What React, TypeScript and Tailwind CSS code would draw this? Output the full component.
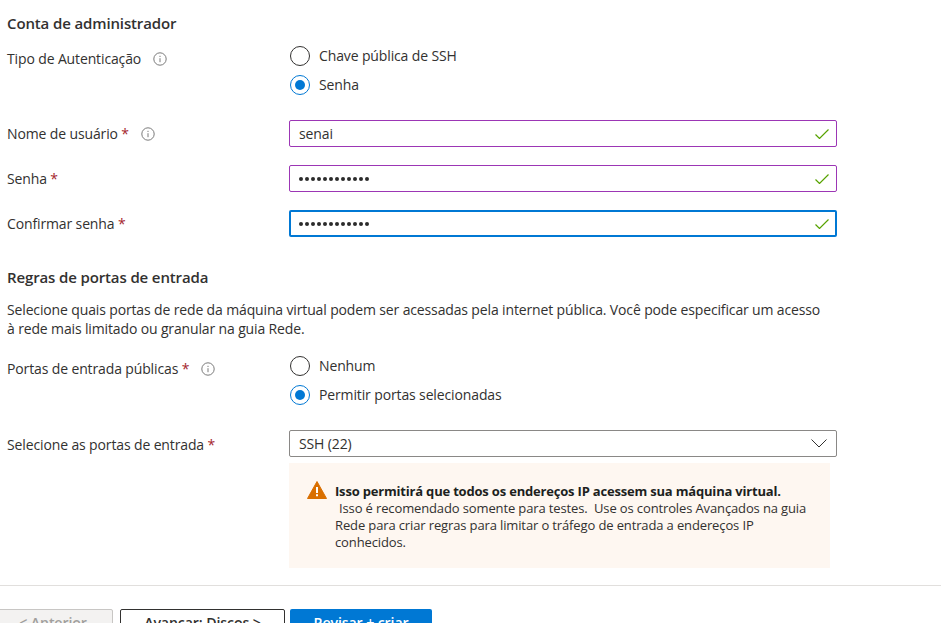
const labelFont = "font-['Open_Sans','Noto_Sans',sans-serif]";

const InfoIcon = () => (
    <svg width="14" height="14" viewBox="0 0 14 14" fill="none" className="shrink-0">
        <circle cx="7" cy="7" r="6.2" stroke="#7a7a7a" strokeWidth="1" />
        <path d="M7 6.2V10.2" stroke="#7a7a7a" strokeWidth="1" />
        <path d="M7 3.8V5" stroke="#7a7a7a" strokeWidth="1" />
    </svg>
);

const CheckIcon = () => (
    <svg width="14" height="10" viewBox="0 0 14 10" fill="none" className="shrink-0">
        <path d="M0.5 5.5L4.5 9.5L13.5 0.5" stroke="#57a300" strokeWidth="1.2" />
    </svg>
);

const Label = ({ text, required, info }: { text: string; required?: boolean; info?: boolean }) => (
    <div className="flex items-center gap-[12px] w-[282px] shrink-0 text-[14px] text-[#323130] tracking-[-0.13px]">
        <span>
            {text}
            {required && <span className="text-[#a4262c]"> *</span>}
        </span>
        {info && <InfoIcon />}
    </div>
);

const Radio = ({ text, checked }: { text: string; checked?: boolean }) => (
    <div className="flex items-center gap-[9px] ml-[1px] h-[20px] text-[14px] text-[#323130] tracking-[-0.13px]">
        {checked ? (
            <span className="w-[20px] h-[20px] rounded-full border border-[#0078d4] flex items-center justify-center">
                <span className="w-[10px] h-[10px] rounded-full bg-[#0078d4]" />
            </span>
        ) : (
            <span className="w-[20px] h-[20px] rounded-full border border-[#323130]" />
        )}
        <span className="mb-[2px]">{text}</span>
    </div>
);

const TextField = ({ value, mask, focused }: { value?: string; mask?: boolean; focused?: boolean }) => (
    <div
        className={`w-[548px] h-[27px] rounded-[2px] flex items-center justify-between text-[14px] text-[#323130] tracking-[-0.13px] ${
            focused ? 'border-2 border-[#0078d4] pl-[8px] pr-[6px]' : 'border border-[#9c36b5] pl-[9px] pr-[7px]'
        }`}
    >
        {mask ? (
            <span className="flex gap-[2px]">
                {Array.from({ length: 12 }).map((_, i) => (
                    <span key={i} className="w-[4px] h-[4px] rounded-full bg-[#2b2b2b]" />
                ))}
            </span>
        ) : (
            <span>{value}</span>
        )}
        <CheckIcon />
    </div>
);

export default function App() {
    return (
        <div className={`w-[941px] h-[623px] overflow-hidden bg-white ${labelFont}`}>
            <div className="pl-[7px] pt-[13px]">
                <h2 className="text-[15px] leading-[20px] font-semibold text-[#323130] tracking-[-0.13px]">Conta de administrador</h2>

                <div className="flex mt-[13px]">
                    <div className="pt-[2px] h-fit">
                        <Label text="Tipo de Autenticação" info />
                    </div>
                    <div className="flex flex-col gap-[9px]">
                        <Radio text="Chave pública de SSH" />
                        <Radio text="Senha" checked />
                    </div>
                </div>

                <div className="flex items-center mt-[25px]">
                    <Label text="Nome de usuário" required info />
                    <TextField value="senai" />
                </div>
                <div className="flex items-center mt-[18px]">
                    <Label text="Senha" required />
                    <TextField mask />
                </div>
                <div className="flex items-center mt-[18px]">
                    <Label text="Confirmar senha" required />
                    <TextField mask focused />
                </div>

                <h2 className="mt-[30px] text-[15px] leading-[20px] font-semibold text-[#323130] tracking-[-0.13px]">Regras de portas de entrada</h2>
                <p className="mt-[13px] w-[840px] text-[14px] leading-[19px] text-[#323130] tracking-[-0.14px]">
                    Selecione quais portas de rede da máquina virtual podem ser acessadas pela internet pública. Você pode especificar um acesso
                    <br />
                    à rede mais limitado ou granular na guia Rede.
                </p>

                <div className="flex mt-[18px]">
                    <div className="pt-[2px] h-fit">
                        <Label text="Portas de entrada públicas" required info />
                    </div>
                    <div className="flex flex-col gap-[9px]">
                        <Radio text="Nenhum" />
                        <Radio text="Permitir portas selecionadas" checked />
                    </div>
                </div>

                <div className="flex items-center mt-[25px]">
                    <div className="pt-[2px]">
                        <Label text="Selecione as portas de entrada" required />
                    </div>
                    <div className="w-[548px] h-[27px] rounded-[2px] border border-[#8a8886] flex items-center justify-between pl-[9px] pr-[9px] text-[14px] text-[#323130] tracking-[-0.13px]">
                        <span>SSH (22)</span>
                        <svg width="16" height="9" viewBox="0 0 16 9" fill="none" className="shrink-0">
                            <path d="M0.5 0.5L8 8L15.5 0.5" stroke="#323130" strokeWidth="1" />
                        </svg>
                    </div>
                </div>

                <div className="ml-[282px] mt-[6px] w-[541px] h-[105px] bg-[#fef7f1] flex gap-[8px] pl-[18px] pt-[19px]">
                    <svg width="20" height="18" viewBox="0 0 20 18" className="shrink-0 mt-[-1px]">
                        <path d="M10 0.5L19.5 17.5H0.5Z" fill="#d96f00" stroke="#d96f00" strokeLinejoin="round" />
                        <path d="M10 6V12" stroke="#fff" strokeWidth="2" />
                        <path d="M10 13.3V15.3" stroke="#fff" strokeWidth="2" />
                    </svg>
                    <div className="w-[490px] text-[13px] leading-[17px] text-[#323130] tracking-[-0.13px] mt-[1px]">
                        <div className="font-bold text-[#201f1e] tracking-[-0.19px]">Isso permitirá que todos os endereços IP acessem sua máquina virtual.</div>
                        <div className="pl-[4px]">Isso é recomendado somente para testes.&nbsp; Use os controles Avançados na guia</div>
                        <div>Rede para criar regras para limitar o tráfego de entrada a endereços IP</div>
                        <div>conhecidos.</div>
                    </div>
                </div>
            </div>

            <div className="mt-[17px] border-t border-[#e1dfdd]" />

            <div className="flex gap-[7px] mt-[23px] ml-[-7px]">
                <button className="w-[120px] h-[32px] rounded-[2px] border border-[#c8c6c4] bg-[#f3f2f1] pb-[5px] text-[14.2px] font-semibold text-[#a19f9d] tracking-[-0.13px]">&lt; Anterior</button>
                <button className="w-[165px] h-[32px] rounded-[2px] border border-[#323130] bg-white pb-[5px] text-[14.2px] font-semibold text-[#323130] tracking-[-0.13px]">Avançar: Discos &gt;</button>
                <button className="ml-[-2px] w-[142px] h-[32px] rounded-[2px] bg-[#0078d4] pb-[5px] text-[14.2px] font-semibold text-white tracking-[-0.13px]">Revisar + criar</button>
            </div>
        </div>
    );
}
